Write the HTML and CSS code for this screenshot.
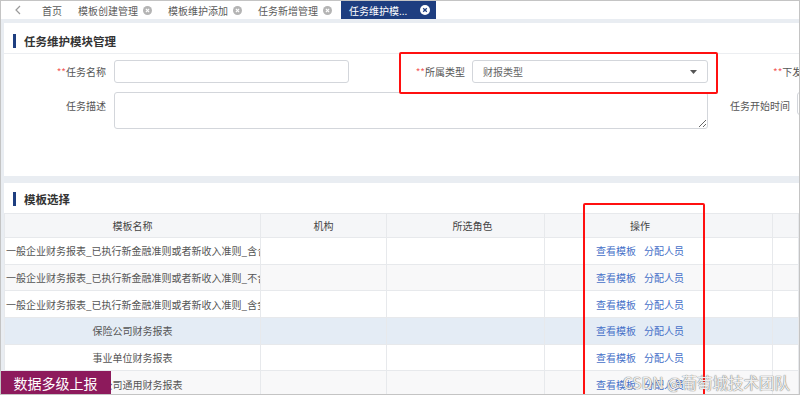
FILE: index.html
```html
<!DOCTYPE html>
<html lang="zh-CN">
<head>
    <meta charset="UTF-8">
    <meta name="viewport" content="width=device-width, initial-scale=1.0">
    <title>任务维护模块管理</title>
    <link rel="stylesheet" href="styles.css">
</head>
<body>
    <div class="frame">
        <nav class="tabs">
            <span class="tab-prev">
                <svg width="8" height="10" viewBox="0 0 8 10"><polyline points="6,1 2,5 6,9" fill="none" stroke="#9a9a9a" stroke-width="1.2"/></svg>
            </span>
            <div class="tab">首页</div>
            <div class="tab">模板创建管理
                <svg class="tab-close" width="9" height="9" viewBox="0 0 10 10"><circle cx="5" cy="5" r="5" fill="#b4b4b4"/><path d="M3.2 3.2l3.6 3.6M6.8 3.2l-3.6 3.6" stroke="#fff" stroke-width="1.3"/></svg>
            </div>
            <div class="tab">模板维护添加
                <svg class="tab-close" width="9" height="9" viewBox="0 0 10 10"><circle cx="5" cy="5" r="5" fill="#b4b4b4"/><path d="M3.2 3.2l3.6 3.6M6.8 3.2l-3.6 3.6" stroke="#fff" stroke-width="1.3"/></svg>
            </div>
            <div class="tab">任务新增管理
                <svg class="tab-close" width="9" height="9" viewBox="0 0 10 10"><circle cx="5" cy="5" r="5" fill="#b4b4b4"/><path d="M3.2 3.2l3.6 3.6M6.8 3.2l-3.6 3.6" stroke="#fff" stroke-width="1.3"/></svg>
            </div>
            <div class="tab active">任务维护模...
                <svg class="tab-close" width="10" height="10" viewBox="0 0 10 10"><circle cx="5" cy="5" r="5" fill="#fff"/><path d="M3.2 3.2l3.6 3.6M6.8 3.2l-3.6 3.6" stroke="#1e3e80" stroke-width="1.3"/></svg>
            </div>
        </nav>

        <div class="content">
            <section class="panel">
                <h2 class="panel-title title-line">任务维护模块管理</h2>
                <div class="form">
                    <label class="label"><span class="req">**</span>任务名称</label>
                    <div class="input"></div>
                    <label class="label label-mid"><span class="req">**</span>所属类型</label>
                    <div class="input select">
                        <span>财报类型</span>
                        <svg width="7" height="4" viewBox="0 0 7 4"><path d="M0 0h7L3.5 4z" fill="#555"/></svg>
                    </div>
                    <label class="label label-far"><span class="req">**</span>下发机构</label>

                    <label class="label label-top">任务描述</label>
                    <textarea class="textarea"></textarea>
                    <label class="label label-mid label-top">任务开始时间</label>
                    <div class="input input-short"></div>
                </div>
            </section>

            <section class="panel">
                <h2 class="panel-title">模板选择</h2>
                <table class="grid">
                    <colgroup>
                        <col style="width:256px">
                        <col style="width:126px">
                        <col style="width:158px">
                        <col style="width:228px">
                        <col>
                    </colgroup>
                    <thead>
                        <tr>
                            <th>模板名称</th>
                            <th>机构</th>
                            <th class="roles">所选角色</th>
                            <th class="ops">操作</th>
                            <th></th>
                        </tr>
                    </thead>
                    <tbody>
                        <tr>
                            <td>一般企业财务报表_已执行新金融准则或者新收入准则_含合并报表</td>
                            <td></td><td></td>
                            <td class="ops"><a class="op">查看模板</a><a class="op">分配人员</a></td>
                            <td></td>
                        </tr>
                        <tr>
                            <td>一般企业财务报表_已执行新金融准则或者新收入准则_不含合并报表</td>
                            <td></td><td></td>
                            <td class="ops"><a class="op">查看模板</a><a class="op">分配人员</a></td>
                            <td></td>
                        </tr>
                        <tr>
                            <td>一般企业财务报表_已执行新金融准则或者新收入准则_含金融企业</td>
                            <td></td><td></td>
                            <td class="ops"><a class="op">查看模板</a><a class="op">分配人员</a></td>
                            <td></td>
                        </tr>
                        <tr class="hover">
                            <td>保险公司财务报表</td>
                            <td></td><td></td>
                            <td class="ops"><a class="op">查看模板</a><a class="op">分配人员</a></td>
                            <td></td>
                        </tr>
                        <tr>
                            <td>事业单位财务报表</td>
                            <td></td><td></td>
                            <td class="ops"><a class="op">查看模板</a><a class="op">分配人员</a></td>
                            <td></td>
                        </tr>
                        <tr>
                            <td>证券公司通用财务报表</td>
                            <td></td><td></td>
                            <td class="ops"><a class="op">查看模板</a><a class="op">分配人员</a></td>
                            <td></td>
                        </tr>
                    </tbody>
                </table>
            </section>
        </div>

        <!-- annotations drawn over the screenshot -->
        <div class="mark mark-type"></div>
        <div class="mark mark-ops"></div>

        <div class="badge">数据多级上报</div>
        <div class="watermark">CSDN @葡萄城技术团队</div>
    </div>
</body>
</html>
```

FILE: styles.css
```css
* {
    box-sizing: border-box;
}

body {
    margin: 0;
    font-family: "Noto Sans CJK SC", "Noto Sans", sans-serif;
    font-size: 10px;
    color: #555;
    background: #fff;
}

.frame {
    position: relative;
    width: 800px;
    height: 395px;
    border: 1px solid #c4c4c4;
    background: #e9edf2;
    overflow: hidden;
}

/* tab bar */
.tabs {
    display: flex;
    align-items: center;
    height: 18px;
    background: #fff;
}

.tab-prev {
    width: 33px;
    display: flex;
    justify-content: center;
    align-items: center;
}

.tab {
    display: flex;
    align-items: center;
    gap: 5px;
    height: 18px;
    padding: 0 8px;
    color: #5a5a5a;
    white-space: nowrap;
}

.tab.active {
    margin-left: 1px;
    gap: 13px;
    padding: 0 6px 0 8px;
    background: #1e3e80;
    color: #fff;
}

/* panels */
.content {
    display: flex;
    flex-direction: column;
    gap: 7px;
    padding: 4px 0 0 3px;
}

.panel {
    background: #fff;
}

.panel-title {
    display: flex;
    align-items: center;
    gap: 8px;
    margin: 0;
    padding: 9px 0 7px 9px;
    font-size: 11.5px;
    line-height: 14px;
    font-weight: bold;
    color: #333;
}

.panel-title::before {
    content: "";
    width: 3px;
    height: 14px;
    background: #1e3e80;
}

.title-line {
    padding: 11px 0 5px 9px;
    border-bottom: 1px solid #eceef1;
}

/* form */
.form {
    display: grid;
    grid-template-columns: 110px 235px 123px 236px 89px 120px;
    grid-template-rows: 23px 37px;
    row-gap: 9px;
    padding: 6px 0 47px;
}

.label {
    padding-right: 8px;
    line-height: 23px;
    text-align: right;
    white-space: nowrap;
    color: #555;
}

.label-mid {
    padding-right: 7px;
}

.label-far {
    grid-column: 5 / 7;
    padding-left: 65px;
    text-align: left;
}

.label-top {
    align-self: start;
    padding-top: 2px;
}

.req {
    color: #f25c5c;
}

.input {
    border: 1px solid #d3d6db;
    border-radius: 3px;
    background: #fff;
}

.input-short {
    height: 23px;
    align-self: start;
}

.select {
    display: flex;
    justify-content: space-between;
    align-items: center;
    padding: 0 10px;
    color: #666;
}

.textarea {
    grid-column: 2 / 5;
    width: 100%;
    height: 100%;
    margin: 0;
    border: 1px solid #d3d6db;
    border-radius: 3px;
    font: inherit;
}

/* table */
.grid {
    width: 100%;
    border-collapse: collapse;
    table-layout: fixed;
}

.grid th,
.grid td {
    padding: 0 1px;
    border: 1px solid #e7e9ec;
    text-align: center;
    white-space: nowrap;
    overflow: hidden;
}

.grid th {
    height: 24px;
    background: #f5f6f8;
    font-weight: normal;
    color: #444;
}

.grid td {
    height: 26.7px;
    color: #555;
}

.grid tbody tr:nth-child(even) td {
    background: #f8f8f9;
}

.grid tbody tr.hover td {
    background: #e4ecf5;
}

.grid .roles {
    padding-left: 15px;
}

.grid .ops {
    padding-right: 38px;
}

.op {
    color: #4670c8;
    margin: 0 4px;
}

/* overlays */
.mark {
    position: absolute;
    border: 2px solid #ff1010;
    border-radius: 2px;
}

.mark-type {
    left: 398px;
    top: 51px;
    width: 319px;
    height: 42px;
}

.mark-ops {
    left: 582px;
    top: 202px;
    width: 122px;
    height: 220px;
}

.badge {
    position: absolute;
    left: -1px;
    bottom: -1px;
    width: 111px;
    height: 24px;
    background: #8d1a5c;
    color: #fff;
    font-size: 14px;
    line-height: 24px;
    text-align: center;
}

.watermark {
    position: absolute;
    right: 9px;
    bottom: 1px;
    font-size: 15.5px;
    color: rgba(255, 255, 255, 0.9);
    text-shadow: 0 0 1px #777, 0 0 1px #777;
    white-space: nowrap;
}
```
